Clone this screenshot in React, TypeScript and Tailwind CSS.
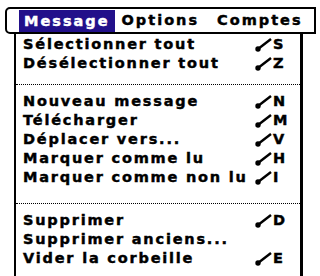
import React from 'react';

type Item = { label: string; key?: string };

const groups: Item[][] = [
  [
    { label: 'Sélectionner tout', key: 'S' },
    { label: 'Désélectionner tout', key: 'Z' },
  ],
  [
    { label: 'Nouveau message', key: 'N' },
    { label: 'Télécharger', key: 'M' },
    { label: 'Déplacer vers...', key: 'V' },
    { label: 'Marquer comme lu', key: 'H' },
    { label: 'Marquer comme non lu', key: 'I' },
  ],
  [
    { label: 'Supprimer', key: 'D' },
    { label: 'Supprimer anciens...' },
    { label: 'Vider la corbeille', key: 'E' },
  ],
];

// Palm-style command stroke: slash with a blob at its foot
function Stroke() {
  return (
    <svg width="17" height="15" viewBox="0 0 17 15" className="shrink-0">
      <line x1="3" y1="12" x2="16" y2="2" stroke="black" strokeWidth="2.4" />
      <circle cx="3" cy="12" r="2.7" fill="black" />
    </svg>
  );
}

function Row({ item }: { item: Item }) {
  return (
    <div className="h-[19px] flex items-center pl-[7px]">
      <span className="flex-1 whitespace-nowrap">{item.label}</span>
      <span className="flex items-center w-[45px]">
        {item.key && (
          <>
            <Stroke />
            <span className="ml-[1px]">{item.key}</span>
          </>
        )}
      </span>
    </div>
  );
}

function Sep({ h, top }: { h: string; top: string }) {
  return (
    <div className={h + ' ' + top}>
      <div className="w-full border-t border-dotted border-black" />
    </div>
  );
}

export default function App() {
  return (
    <div className="w-[320px] h-[276px] bg-white overflow-hidden font-['DejaVu_Sans',sans-serif] font-bold text-[14.5px] text-black tracking-[1.8px] leading-none [-webkit-text-stroke-width:0.45px]">
      <div className="pt-[7px] pl-[5px]">
        <div className="w-[311px] h-[27px] border-2 border-black rounded-l-[5px] flex items-center pl-[12px] tracking-[2px]">
          <span className="bg-[#22108a] text-white h-[22px] pl-[5px] pr-[5px] flex items-center mt-[1px]">Message</span>
          <span className="ml-[7px]">Options</span>
          <span className="ml-[18px]">Comptes</span>
        </div>
      </div>
      <div className="ml-[14px] w-[289px] border-l-2 border-r-[3px] border-black pt-[1px] h-[250px]">
        {groups[0].map((it) => (
          <Row key={it.label} item={it} />
        ))}
        <Sep h="h-[19px]" top="pt-[11px]" />
        {groups[1].map((it) => (
          <Row key={it.label} item={it} />
        ))}
        <Sep h="h-[24px]" top="pt-[16px]" />
        {groups[2].map((it) => (
          <Row key={it.label} item={it} />
        ))}
      </div>
    </div>
  );
}
